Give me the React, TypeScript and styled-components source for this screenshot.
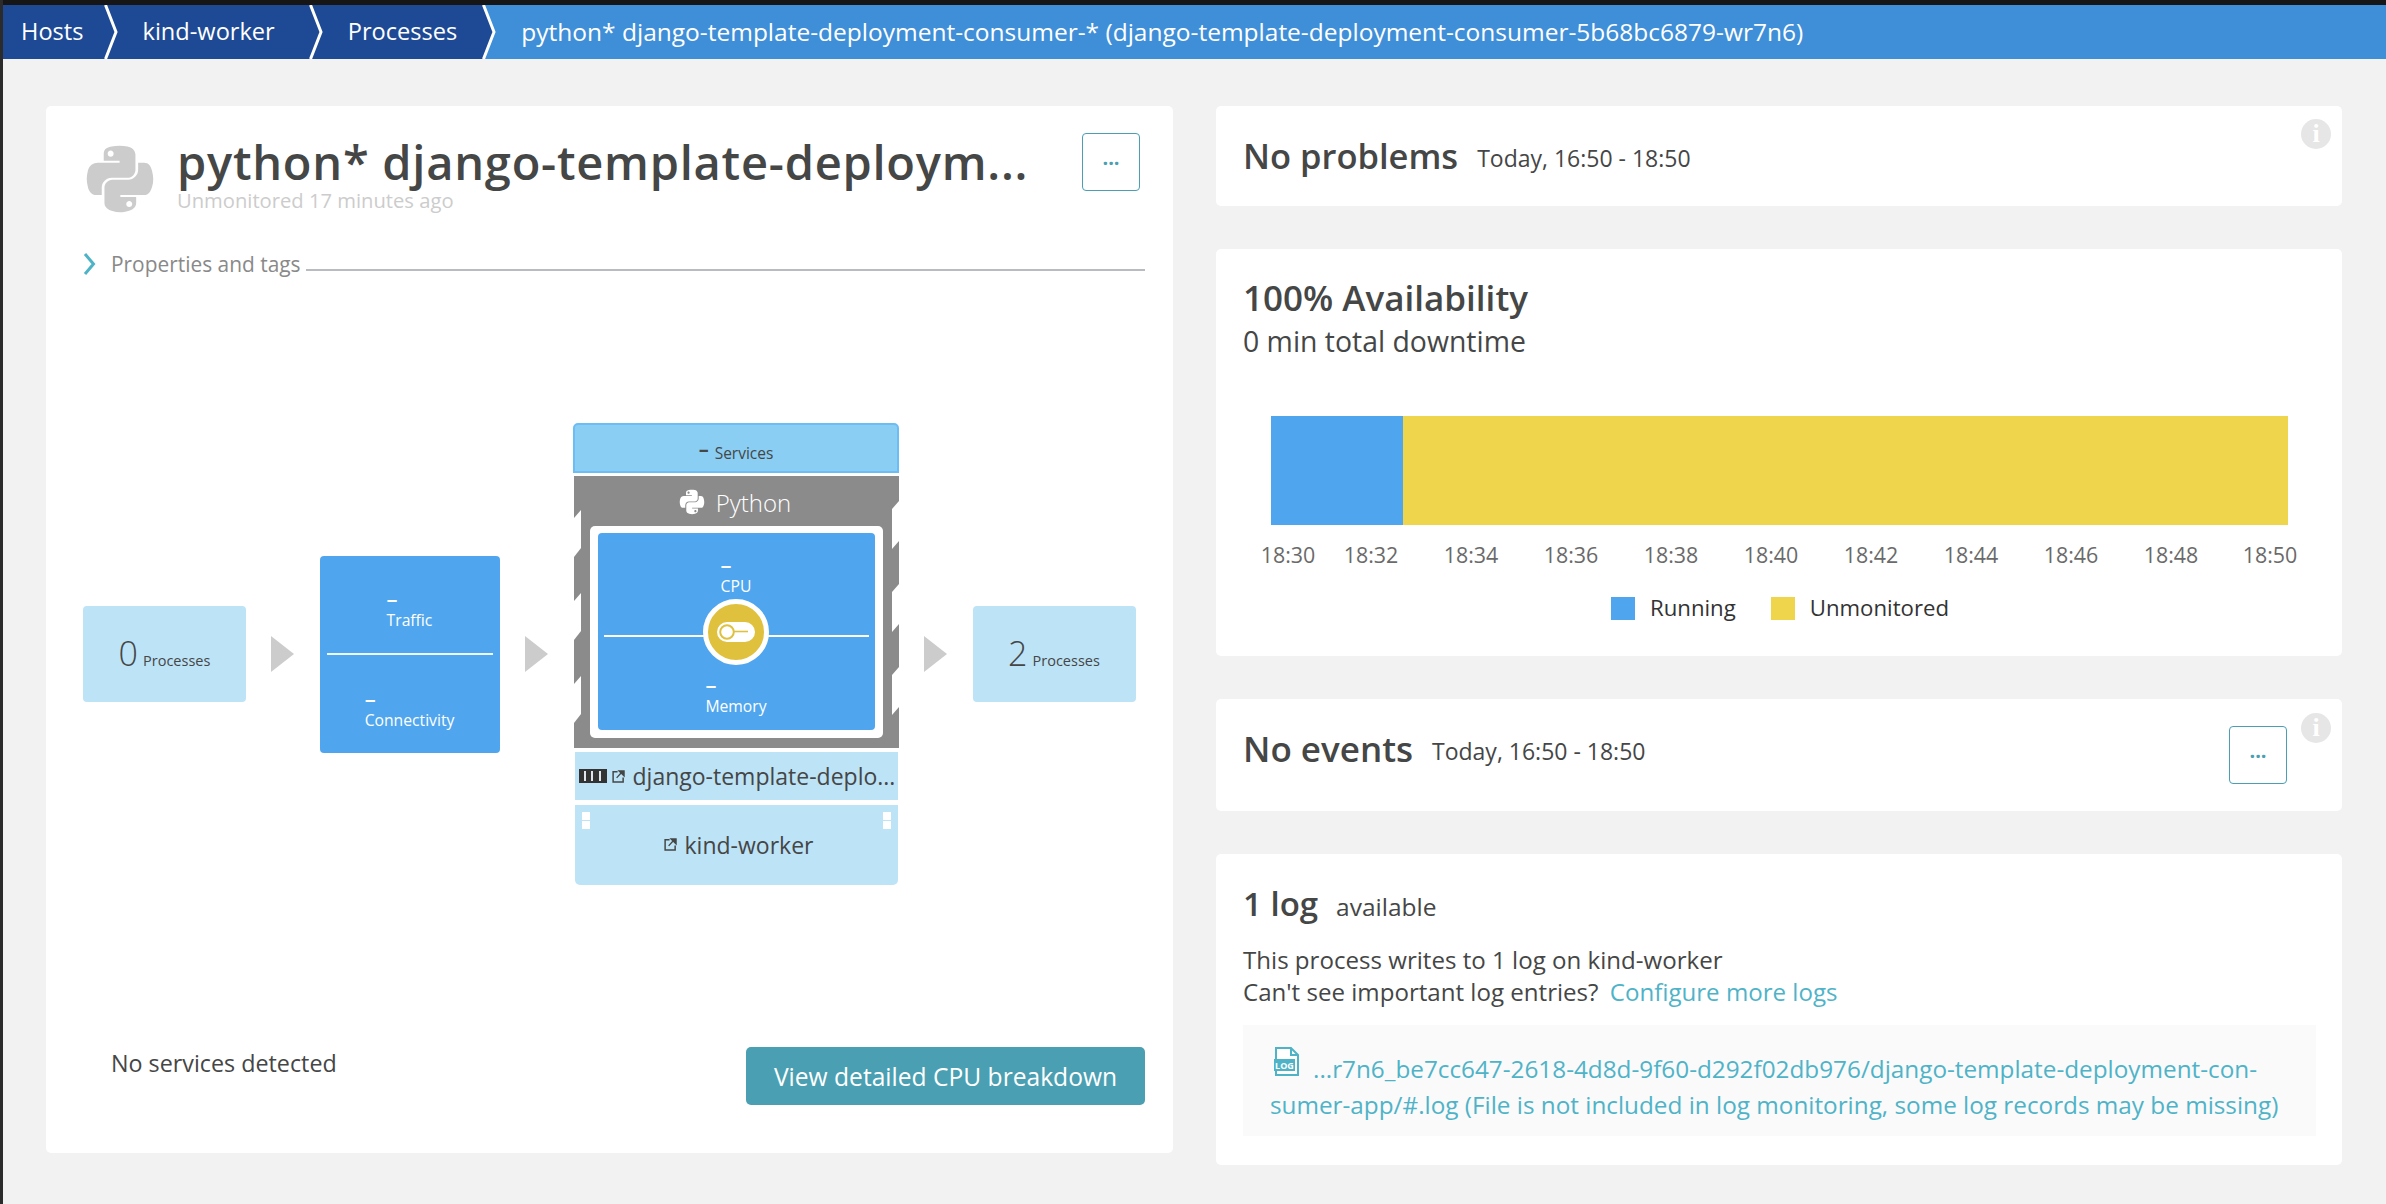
import styled, {createGlobalStyle} from 'styled-components';
import {FaPython} from 'react-icons/fa';

const FONT = `'Open Sans', 'Noto Sans', sans-serif`;

const GlobalStyle = createGlobalStyle`
  html, body {
    margin: 0;
    padding: 0;
    background: #f2f2f2;
    font-family: ${FONT};
    color: #454646;
  }
  * {
    box-sizing: border-box;
  }
`;

const crumbs = [
  {label: 'Hosts', left: 18, right: 20},
  {label: 'kind-worker', left: 23, right: 34},
  {label: 'Processes', left: 23, right: 25},
];
const ticks = [
  {label: '18:30', gap: 0},
  {label: '18:32', gap: 11},
  {label: '18:34', gap: 28},
  {label: '18:36', gap: 28},
  {label: '18:38', gap: 28},
  {label: '18:40', gap: 28},
  {label: '18:42', gap: 28},
  {label: '18:44', gap: 28},
  {label: '18:46', gap: 28},
  {label: '18:48', gap: 28},
  {label: '18:50', gap: 27},
];

const Chevron = ({to}: {to: string}) => (
  <ChevronSvg viewBox="0 0 16 54" preserveAspectRatio="none">
    <rect width="16" height="54" fill="#1e4a95" />
    <path d="M0 0 L13 27 L0 54 L16 54 L16 0 Z" fill={to} />
    <path d="M1.5 0 L12 27 L1.5 54" fill="none" stroke="#fff" strokeWidth="3" />
  </ChevronSvg>
);

const ExternalIcon = () => (
  <ExternalSvg viewBox="0 0 14 14">
    <path d="M6 2 H1.2 V12.8 H12 V8" fill="none" stroke="#454646" strokeWidth="1.6" />
    <path d="M7.5 1 H13 V6.5 Z M10 3 L5 8.5" fill="#454646" stroke="#454646" strokeWidth="1.4" />
  </ExternalSvg>
);

const Notches = ({side}: {side: 'left' | 'right'}) => {
  const tops = [42, 125, 208];
  return (
    <NotchSvg $side={side} viewBox="0 0 7 272">
      {tops.map((y) => (
        <polygon
          key={y}
          fill="#fff"
          points={side === 'left'
            ? `0,${y} 7,${y - 8} 7,${y + 30} 0,${y + 39}`
            : `7,${y - 17} 0,${y - 9} 0,${y + 31} 7,${y + 23}`}
        />
      ))}
    </NotchSvg>
  );
};

const Metric = ({label}: {label: string}) => (
  <MetricBlock>
    <MetricDash>–</MetricDash>
    <MetricLabel>{label}</MetricLabel>
  </MetricBlock>
);

const InfoBadge = ({top}: {top: number}) => (
  <InfoCircle style={{top}}>i</InfoCircle>
);

export default function App() {
  return (
    <Page>
      <GlobalStyle />
      <TopEdge />
      <Breadcrumb>
        {crumbs.map((crumb, index) => (
          <CrumbGroup key={crumb.label}>
            <Crumb $left={crumb.left} $right={crumb.right}>{crumb.label}</Crumb>
            <Chevron to={index === crumbs.length - 1 ? '#3f8ed8' : '#1e4a95'} />
          </CrumbGroup>
        ))}
        <CurrentCrumb>python* django-template-deployment-consumer-* (django-template-deployment-consumer-5b68bc6879-wr7n6)</CurrentCrumb>
      </Breadcrumb>

      <Columns>
        <LeftCard>
          <Header>
            <FaPython size={76} color="#cccccc" />
            <TitleBlock>
              <Title>python* django-template-deploym...</Title>
              <Subtitle>Unmonitored 17 minutes ago</Subtitle>
            </TitleBlock>
            <MoreButton>···</MoreButton>
          </Header>

          <PropertiesRow>
            <svg width="13" height="22" viewBox="0 0 13 22">
              <path d="M2 1 L10.5 11 L2 21" fill="none" stroke="#4fb3c8" strokeWidth="3" />
            </svg>
            <PropertiesLabel>Properties and tags</PropertiesLabel>
            <PropertiesLine />
          </PropertiesRow>

          <Diagram>
            <SideBox>
              <BigCount>0</BigCount>
              <SmallLabel>Processes</SmallLabel>
            </SideBox>
            <Arrow />
            <TrafficBox>
              <TrafficHalf><Metric label="Traffic" /></TrafficHalf>
              <TrafficDivider />
              <TrafficHalf><Metric label="Connectivity" /></TrafficHalf>
            </TrafficBox>
            <Arrow />
            <CenterColumn>
              <ServicesBar>
                <ServicesDash>–</ServicesDash>
                <ServicesLabel>Services</ServicesLabel>
              </ServicesBar>
              <ProcessBlock>
                <Notches side="left" />
                <Notches side="right" />
                <ProcessHeading>
                  <FaPython size={28} color="#ffffff" />
                  <span>Python</span>
                </ProcessHeading>
                <InnerFrame>
                  <InnerBlue>
                    <InnerHalf $top><Metric label="CPU" /></InnerHalf>
                    <InnerLine />
                    <StateDot>
                      <svg width="38" height="20" viewBox="0 0 38 20">
                        <rect x="0" y="0" width="38" height="20" rx="10" fill="#fff" />
                        <circle cx="10" cy="10" r="6.8" fill="#fff" stroke="#dfc13e" strokeWidth="2" />
                        <path d="M17 9.5 H31" stroke="#dfc13e" strokeWidth="1.6" />
                      </svg>
                    </StateDot>
                    <InnerHalf><Metric label="Memory" /></InnerHalf>
                  </InnerBlue>
                </InnerFrame>
              </ProcessBlock>
              <GroupRow>
                <BarsBadge><i /><i /><i /></BarsBadge>
                <ExternalIcon />
                <GroupName>django-template-deplo...</GroupName>
              </GroupRow>
              <HostRow>
                <HostSlots $side="left"><i /><i /></HostSlots>
                <HostSlots $side="right"><i /><i /></HostSlots>
                <ExternalIcon />
                <HostName>kind-worker</HostName>
              </HostRow>
            </CenterColumn>
            <Arrow />
            <SideBox>
              <BigCount>2</BigCount>
              <SmallLabel>Processes</SmallLabel>
            </SideBox>
          </Diagram>

          <Footer>
            <FooterNote>No services detected</FooterNote>
            <PrimaryButton>View detailed CPU breakdown</PrimaryButton>
          </Footer>
        </LeftCard>

        <RightColumn>
          <StripCard $height={100}>
            <InfoBadge top={13} />
            <ProblemsTitle>No problems</ProblemsTitle>
            <CardMeta>Today, 16:50 - 18:50</CardMeta>
          </StripCard>

          <AvailabilityCard>
            <CardTitle>100% Availability</CardTitle>
            <Downtime>0 min total downtime</Downtime>
            <Bar>
              <BarPart $color="#4fa6ee" $width={132} />
              <BarPart $color="#efd54b" $width={885} />
            </Bar>
            <Axis>
              {ticks.map((tick) => (
                <AxisLabel key={tick.label} $gap={tick.gap}>{tick.label}</AxisLabel>
              ))}
            </Axis>
            <Legend>
              <LegendSwatch $color="#4fa6ee" />
              <LegendText>Running</LegendText>
              <LegendSwatch $color="#efd54b" />
              <LegendText>Unmonitored</LegendText>
            </Legend>
          </AvailabilityCard>

          <EventsCard $height={112}>
            <InfoBadge top={14} />
            <CardTitle>No events</CardTitle>
            <CardMeta>Today, 16:50 - 18:50</CardMeta>
            <EventsButton>···</EventsButton>
          </EventsCard>

          <LogCard>
            <LogHeading>
              <LogTitle>1 log</LogTitle>
              <LogAvailable>available</LogAvailable>
            </LogHeading>
            <LogText>This process writes to 1 log on kind-worker</LogText>
            <LogText>Can't see important log entries? <ConfigureLink>Configure more logs</ConfigureLink></LogText>
            <LogBox>
              <LogFirstLine>
                <svg width="28" height="30" viewBox="0 0 28 30">
                  <path d="M3 1 H18 L25 8 V28 H3 Z" fill="#fff" stroke="#4fb3c8" strokeWidth="2" />
                  <path d="M18 1 V8 H25" fill="none" stroke="#4fb3c8" strokeWidth="2" />
                  <rect x="1" y="12" width="21" height="12" fill="#4fb3c8" />
                  <text x="11.5" y="22" fontSize="9" fontWeight="700" fill="#fff" textAnchor="middle" fontFamily="'Open Sans', sans-serif">LOG</text>
                </svg>
                <LogLink>...r7n6_be7cc647-2618-4d8d-9f60-d292f02db976/django-template-deployment-con-</LogLink>
              </LogFirstLine>
              <LogLink>sumer-app/#.log (File is not included in log monitoring, some log records may be missing)</LogLink>
            </LogBox>
          </LogCard>
        </RightColumn>
      </Columns>
    </Page>
  );
}

const Page = styled.div`
  width: 2386px;
  height: 1204px;
  overflow: hidden;
  background: #f2f2f2;
  border-left: 3px solid #2b2b2b;
`;

const TopEdge = styled.div`
  height: 5px;
  margin-left: -3px;
  background: #161616;
`;

const Breadcrumb = styled.nav`
  display: flex;
  align-items: stretch;
  height: 54px;
  background: #3f8ed8;
  color: #fff;
  font-size: 24.5px;
`;

const CrumbGroup = styled.div`
  display: flex;
  align-items: stretch;
`;

const Crumb = styled.div<{$left: number; $right: number}>`
  display: flex;
  align-items: center;
  padding: 0 ${(p) => p.$right}px 2px ${(p) => p.$left}px;
  font-size: 23.6px;
  background: #1e4a95;
`;

const ChevronSvg = styled.svg`
  width: 16px;
  height: 54px;
  display: block;
`;

const CurrentCrumb = styled.div`
  display: flex;
  align-items: center;
  padding: 0 0 2px 23px;
  white-space: nowrap;
`;

const Columns = styled.main`
  display: grid;
  grid-template-columns: 1127px 1126px;
  column-gap: 43px;
  align-items: start;
  padding: 47px 0 0 43px;
`;

const LeftCard = styled.section`
  display: flex;
  flex-direction: column;
  background: #fff;
  border-radius: 5px;
  padding: 26px 28px 48px 0;
`;

const Header = styled.header`
  display: flex;
  align-items: flex-start;
  padding-left: 36px;

  > svg {
    margin-top: 9px;
  }
`;

const TitleBlock = styled.div`
  margin-left: 19px;
  width: 880px;
`;

const Title = styled.h1`
  margin: 5px 0 0;
  font-size: 47px;
  letter-spacing: 0.75px;
  line-height: 50px;
  font-weight: 600;
  color: #454646;
  white-space: nowrap;
`;

const Subtitle = styled.div`
  margin-top: 1px;
  font-size: 20.2px;
  line-height: 24px;
  color: #cccccc;
`;

const MoreButton = styled.button`
  width: 58px;
  height: 58px;
  margin-top: 1px;
  margin-left: auto;
  margin-right: 5px;
  background: #fff;
  border: 1px solid #4a9fb2;
  border-radius: 4px;
  color: #4a9fb2;
  font-size: 20px;
  font-weight: 700;
  font-family: ${FONT};
  padding: 0;
`;

const PropertiesRow = styled.div`
  display: flex;
  align-items: center;
  height: 24px;
  margin-top: 35px;
  padding-left: 37px;
`;

const PropertiesLabel = styled.span`
  margin-left: 15px;
  font-size: 20.9px;
  color: #898989;
  white-space: nowrap;
`;

const PropertiesLine = styled.div`
  flex: 1;
  height: 2px;
  margin: 12px 0 0 5px;
  background: #b8bcc0;
`;

const Diagram = styled.div`
  display: flex;
  align-items: center;
  gap: 25.25px;
  margin-top: 147px;
  padding-left: 37px;
`;

const SideBox = styled.div`
  display: flex;
  align-items: baseline;
  justify-content: center;
  gap: 5px;
  flex: none;
  width: 163px;
  height: 96px;
  padding-top: 25px;
  background: #bde3f7;
  border-radius: 4px;
`;

const BigCount = styled.span`
  font-size: 34px;
  font-weight: 300;
  line-height: 44px;
`;

const SmallLabel = styled.span`
  font-size: 14.5px;
`;

const Arrow = styled.div`
  flex: none;
  width: 0;
  height: 0;
  border-left: 23px solid #cccccc;
  border-top: 18px solid transparent;
  border-bottom: 18px solid transparent;
`;

const TrafficBox = styled.div`
  display: flex;
  flex-direction: column;
  flex: none;
  width: 180px;
  height: 197px;
  padding: 0 7px;
  background: #4fa6ee;
  border-radius: 4px;
`;

const TrafficHalf = styled.div`
  flex: 1;
  display: flex;
  align-items: center;
  justify-content: center;
  padding-top: 12px;
`;

const TrafficDivider = styled.div`
  height: 2px;
  background: #fff;
  opacity: 0.9;
`;

const MetricBlock = styled.div`
  display: inline-flex;
  flex-direction: column;
  align-items: flex-start;
  color: #fff;
`;

const MetricDash = styled.span`
  font-size: 22px;
  line-height: 21px;
  font-weight: 600;
`;

const MetricLabel = styled.span`
  font-size: 15.7px;
  line-height: 23px;
  white-space: nowrap;
`;

const CenterColumn = styled.div`
  display: flex;
  flex-direction: column;
  align-items: center;
  flex: none;
  width: 326px;
`;

const ServicesBar = styled.div`
  display: flex;
  align-items: center;
  justify-content: center;
  gap: 6px;
  width: 100%;
  height: 50px;
  padding-top: 10px;
  background: #8aceF3;
  border: 2px solid #6dbdf5;
  border-radius: 5px 5px 0 0;
`;

const ServicesDash = styled.span`
  font-size: 20px;
  line-height: 14px;
  font-weight: 700;
  margin-top: -8px;
`;

const ServicesLabel = styled.span`
  font-size: 15.5px;
`;

const ProcessBlock = styled.div`
  position: relative;
  width: 325px;
  height: 272px;
  margin-top: 3px;
  background: #8b8b8b;
  padding: 0 16px;
`;

const NotchSvg = styled.svg<{$side: 'left' | 'right'}>`
  position: absolute;
  top: 0;
  ${(p) => p.$side}: 0;
  width: 7px;
  height: 272px;
`;

const ProcessHeading = styled.div`
  display: flex;
  align-items: center;
  justify-content: center;
  gap: 10px;
  height: 50px;
  padding: 2px 3px 0 0;
  color: #fff;
  font-size: 24px;
  font-weight: 300;
`;

const InnerFrame = styled.div`
  height: 212px;
  padding: 7px 8px 8px;
  background: #fff;
  border-radius: 5px;
`;

const InnerBlue = styled.div`
  position: relative;
  display: flex;
  flex-direction: column;
  height: 100%;
  background: #4fa6ee;
  border-radius: 4px;
`;

const InnerHalf = styled.div<{$top?: boolean}>`
  flex: 1;
  display: flex;
  justify-content: center;
  align-items: ${(p) => (p.$top ? 'flex-start' : 'flex-end')};
  padding: ${(p) => (p.$top ? '21px 0 0' : '0 0 12px')};
`;

const InnerLine = styled.div`
  height: 2px;
  margin: 0 6px;
  background: #fff;
`;

const StateDot = styled.div`
  position: absolute;
  left: 50%;
  top: 50%;
  width: 66px;
  height: 66px;
  margin: -33px 0 0 -33px;
  display: flex;
  align-items: center;
  justify-content: center;
  background: #dfc13e;
  border: 5px solid #fff;
  border-radius: 50%;
`;

const GroupRow = styled.div`
  display: flex;
  align-items: center;
  width: 323px;
  height: 48px;
  margin-top: 4px;
  padding-left: 4px;
  background: #bde3f7;
`;

const BarsBadge = styled.div`
  display: flex;
  justify-content: space-around;
  align-items: stretch;
  width: 28px;
  height: 14px;
  padding: 2px 3px;
  background: #333;

  i {
    width: 2px;
    background: #dfe7ec;
  }
`;

const ExternalSvg = styled.svg`
  flex: none;
  width: 13px;
  height: 13px;
  margin-left: 5px;
`;

const GroupName = styled.span`
  margin-left: 8px;
  font-size: 23px;
  white-space: nowrap;
`;

const HostRow = styled.div`
  position: relative;
  display: flex;
  align-items: center;
  justify-content: center;
  width: 323px;
  height: 80px;
  margin-top: 5px;
  padding-bottom: 1px;
  background: #bde3f7;
  border-radius: 0 0 5px 5px;
`;

const HostSlots = styled.div<{$side: 'left' | 'right'}>`
  position: absolute;
  top: 7px;
  ${(p) => p.$side}: 7px;
  display: flex;
  flex-direction: column;
  gap: 1px;

  i {
    width: 8px;
    height: 8px;
    background: #fff;
  }
`;

const HostName = styled.span`
  margin-left: 8px;
  font-size: 23px;
`;

const Footer = styled.footer`
  display: flex;
  align-items: flex-start;
  justify-content: space-between;
  margin-top: 162px;
  padding-left: 65px;
`;

const FooterNote = styled.span`
  font-size: 23.3px;
  line-height: 32px;
`;

const PrimaryButton = styled.button`
  width: 399px;
  height: 58px;
  padding: 0;
  background: #4a9fb2;
  border: none;
  border-radius: 5px;
  color: #fff;
  font-family: ${FONT};
  font-size: 24.6px;
  font-weight: 500;
  white-space: nowrap;
`;

const RightColumn = styled.div`
  display: flex;
  flex-direction: column;
  gap: 43px;
`;

const Card = styled.section`
  position: relative;
  background: #fff;
  border-radius: 5px;
  padding: 0 27px;
`;

const StripCard = styled(Card)<{$height: number}>`
  display: flex;
  align-items: center;
  height: ${(p) => p.$height}px;
`;

const EventsCard = styled(StripCard)`
  padding-bottom: 12px;
`;

const InfoCircle = styled.span`
  position: absolute;
  right: 11px;
  width: 30px;
  height: 30px;
  border-radius: 50%;
  background: #e6e6e6;
  color: #fff;
  font-family: 'Liberation Serif', serif;
  font-size: 26px;
  font-weight: 700;
  line-height: 30px;
  text-align: center;
`;

const CardTitle = styled.h2`
  margin: 0;
  font-size: 35px;
  line-height: 40px;
  font-weight: 600;
  color: #454646;
  white-space: nowrap;
`;

const ProblemsTitle = styled(CardTitle)`
  font-size: 34.5px;
`;

const LogTitle = styled(CardTitle)`
  font-size: 33px;
`;

const CardMeta = styled.span`
  margin: 3px 0 0 19px;
  font-size: 23px;
  white-space: nowrap;
`;

const EventsButton = styled(MoreButton)`
  margin-top: 12px;
  margin-right: 28px;
`;

const AvailabilityCard = styled(Card)`
  height: 407px;
  padding-top: 29px;
`;

const Downtime = styled.div`
  margin-top: 7px;
  font-size: 28.4px;
  line-height: 32px;
`;

const Bar = styled.div`
  display: flex;
  height: 109px;
  margin: 59px 0 0 28px;
`;

const BarPart = styled.div<{$color: string; $width: number}>`
  width: ${(p) => p.$width}px;
  background: ${(p) => p.$color};
`;

const Axis = styled.div`
  display: flex;
  margin: 18px 0 0 9px;
`;

const AxisLabel = styled.span<{$gap: number}>`
  flex: none;
  width: 72px;
  margin-left: ${(p) => p.$gap}px;
  font-size: 21.4px;
  line-height: 24px;
  color: #6a6a6a;
  text-align: center;
`;

const Legend = styled.div`
  display: flex;
  align-items: center;
  margin: 27px 0 0 368px;
`;

const LegendSwatch = styled.span<{$color: string}>`
  flex: none;
  width: 24px;
  height: 23px;
  background: ${(p) => p.$color};
`;

const LegendText = styled.span`
  margin: -2px 35px 0 15px;
  font-size: 22.2px;
  color: #333;
`;

const LogCard = styled(Card)`
  height: 311px;
  padding-top: 30px;
`;

const LogHeading = styled.div`
  display: flex;
  align-items: baseline;
  gap: 18px;
  margin-bottom: 20px;
`;

const LogAvailable = styled.span`
  font-size: 24.5px;
`;

const LogText = styled.div`
  font-size: 24.1px;
  line-height: 32px;
`;

const LogLink = styled.span`
  color: #4fb3c8;
`;

const ConfigureLink = styled(LogLink)`
  margin-left: 5px;
`;

const LogBox = styled.div`
  width: 1073px;
  height: 111px;
  margin-top: 17px;
  padding: 26px 20px 0 27px;
  background: #fafafa;
  font-size: 24.3px;
  line-height: 36px;
  white-space: nowrap;
`;

const LogFirstLine = styled.div`
  display: flex;
  align-items: flex-start;
  gap: 12px;

  svg {
    margin: -4px 0 0 3px;
    flex: none;
  }
`;
